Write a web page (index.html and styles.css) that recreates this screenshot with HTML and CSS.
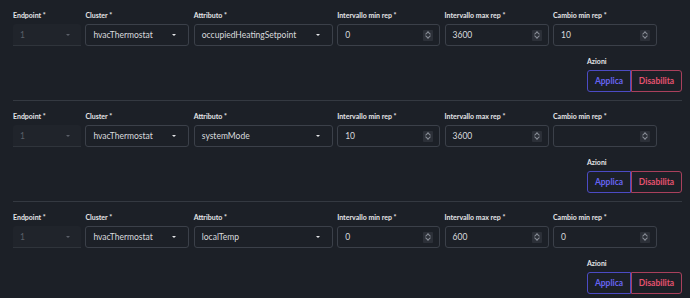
FILE: index.html
```html
<!DOCTYPE html>
<html lang="it">
<head>
    <meta charset="UTF-8">
    <meta name="viewport" content="width=device-width, initial-scale=1.0">
    <title>Reporting</title>
    <link rel="stylesheet" href="styles.css">
</head>
<body>

<div class="container">
    <!-- Riga 1 -->
    <div class="row">
        <div class="fields">
            <div class="field">
                <label>Endpoint *</label>
                <div class="box disabled"><span>1</span><span class="arrow"></span></div>
            </div>
            <div class="field">
                <label>Cluster *</label>
                <div class="box"><span>hvacThermostat</span><span class="arrow"></span></div>
            </div>
            <div class="field">
                <label>Attributo *</label>
                <div class="box"><span>occupiedHeatingSetpoint</span><span class="arrow"></span></div>
            </div>
            <div class="field">
                <label>Intervallo min rep *</label>
                <div class="box"><span>0</span><span class="spin"></span></div>
            </div>
            <div class="field">
                <label>Intervallo max rep *</label>
                <div class="box"><span>3600</span><span class="spin"></span></div>
            </div>
            <div class="field">
                <label>Cambio min rep *</label>
                <div class="box"><span>10</span><span class="spin"></span></div>
            </div>
        </div>
        <div class="actions">
            <label>Azioni</label>
            <div class="btn-group">
                <button class="apply">Applica</button>
                <button class="disable">Disabilita</button>
            </div>
        </div>
    </div>

    <!-- Riga 2 -->
    <div class="row">
        <div class="fields">
            <div class="field">
                <label>Endpoint *</label>
                <div class="box disabled"><span>1</span><span class="arrow"></span></div>
            </div>
            <div class="field">
                <label>Cluster *</label>
                <div class="box"><span>hvacThermostat</span><span class="arrow"></span></div>
            </div>
            <div class="field">
                <label>Attributo *</label>
                <div class="box"><span>systemMode</span><span class="arrow"></span></div>
            </div>
            <div class="field">
                <label>Intervallo min rep *</label>
                <div class="box"><span>10</span><span class="spin"></span></div>
            </div>
            <div class="field">
                <label>Intervallo max rep *</label>
                <div class="box"><span>3600</span><span class="spin"></span></div>
            </div>
            <div class="field">
                <label>Cambio min rep *</label>
                <div class="box"><span></span><span class="spin"></span></div>
            </div>
        </div>
        <div class="actions">
            <label>Azioni</label>
            <div class="btn-group">
                <button class="apply">Applica</button>
                <button class="disable">Disabilita</button>
            </div>
        </div>
    </div>

    <!-- Riga 3 -->
    <div class="row">
        <div class="fields">
            <div class="field">
                <label>Endpoint *</label>
                <div class="box disabled"><span>1</span><span class="arrow"></span></div>
            </div>
            <div class="field">
                <label>Cluster *</label>
                <div class="box"><span>hvacThermostat</span><span class="arrow"></span></div>
            </div>
            <div class="field">
                <label>Attributo *</label>
                <div class="box"><span>localTemp</span><span class="arrow"></span></div>
            </div>
            <div class="field">
                <label>Intervallo min rep *</label>
                <div class="box"><span>0</span><span class="spin"></span></div>
            </div>
            <div class="field">
                <label>Intervallo max rep *</label>
                <div class="box"><span>600</span><span class="spin"></span></div>
            </div>
            <div class="field">
                <label>Cambio min rep *</label>
                <div class="box"><span>0</span><span class="spin"></span></div>
            </div>
        </div>
        <div class="actions">
            <label>Azioni</label>
            <div class="btn-group">
                <button class="apply">Applica</button>
                <button class="disable">Disabilita</button>
            </div>
        </div>
    </div>
</div>

</body>
</html>
```

FILE: styles.css
```css
body {
    margin: 0;
    padding: 0;
    background-color: #1c2027;
    color: #dcdde0;
    font-family: Lato, "Noto Sans", sans-serif;
    overflow: hidden;
}

.container {
    padding: 0 8px 0 13px;
}

.row {
    padding: 10px 0 8px;
    border-bottom: 1px solid #343941;
}

.row:last-child {
    border-bottom: none;
}

.fields {
    display: grid;
    grid-template-columns: 68px 104px 139px 103px 104px 104px;
    column-gap: 4.4px;
}

label {
    display: block;
    font-size: 7px;
    font-weight: bold;
    line-height: 10px;
    color: #e4e5e8;
    margin-bottom: 4px;
}

.box {
    height: 22px;
    box-sizing: border-box;
    border: 1px solid #3b4049;
    border-radius: 3px;
    display: flex;
    align-items: center;
    justify-content: space-between;
    padding: 0 6px 0 7px;
    font-size: 8.5px;
    color: #dadbde;
}

.box.disabled {
    border: none;
    border-bottom: 1px solid #2f343b;
    border-radius: 3px 3px 0 0;
    background-color: #20242b;
    color: #5a5f68;
}

/* freccia del select */
.arrow {
    width: 0;
    height: 0;
    border-left: 2.5px solid transparent;
    border-right: 2.5px solid transparent;
    border-top: 2.5px solid #e6e7ea;
    margin-right: 6px;
}

.disabled .arrow {
    border-top-color: #5a5f68;
    margin-right: 5px;
}

/* frecce del campo numerico */
.spin {
    position: relative;
    width: 10px;
    height: 11px;
    background-color: #2c3038;
    border-radius: 1px;
}

.spin::before,
.spin::after {
    content: "";
    position: absolute;
    left: 3px;
    width: 3px;
    height: 3px;
    border-left: 1px solid #8a8f98;
    border-top: 1px solid #8a8f98;
}

.spin::before {
    top: 2.5px;
    transform: rotate(45deg);
}

.spin::after {
    top: 4.5px;
    transform: rotate(225deg);
}

.actions {
    width: 95px;
    margin: 10px 0 0 auto;
}

.btn-group {
    display: flex;
    height: 22px;
}

.btn-group button {
    font-family: Lato, "Noto Sans", sans-serif;
    font-size: 8.5px;
    font-weight: bold;
    background: transparent;
    padding: 0;
    cursor: pointer;
    height: 22px;
    box-sizing: border-box;
}

.apply {
    width: 44px;
    border: 1px solid #4c4bc4;
    border-radius: 3px 0 0 3px;
    color: #6764f2;
}

.disable {
    width: 51px;
    border: 1px solid #a9405c;
    border-radius: 0 3px 3px 0;
    color: #e5526f;
}
```
